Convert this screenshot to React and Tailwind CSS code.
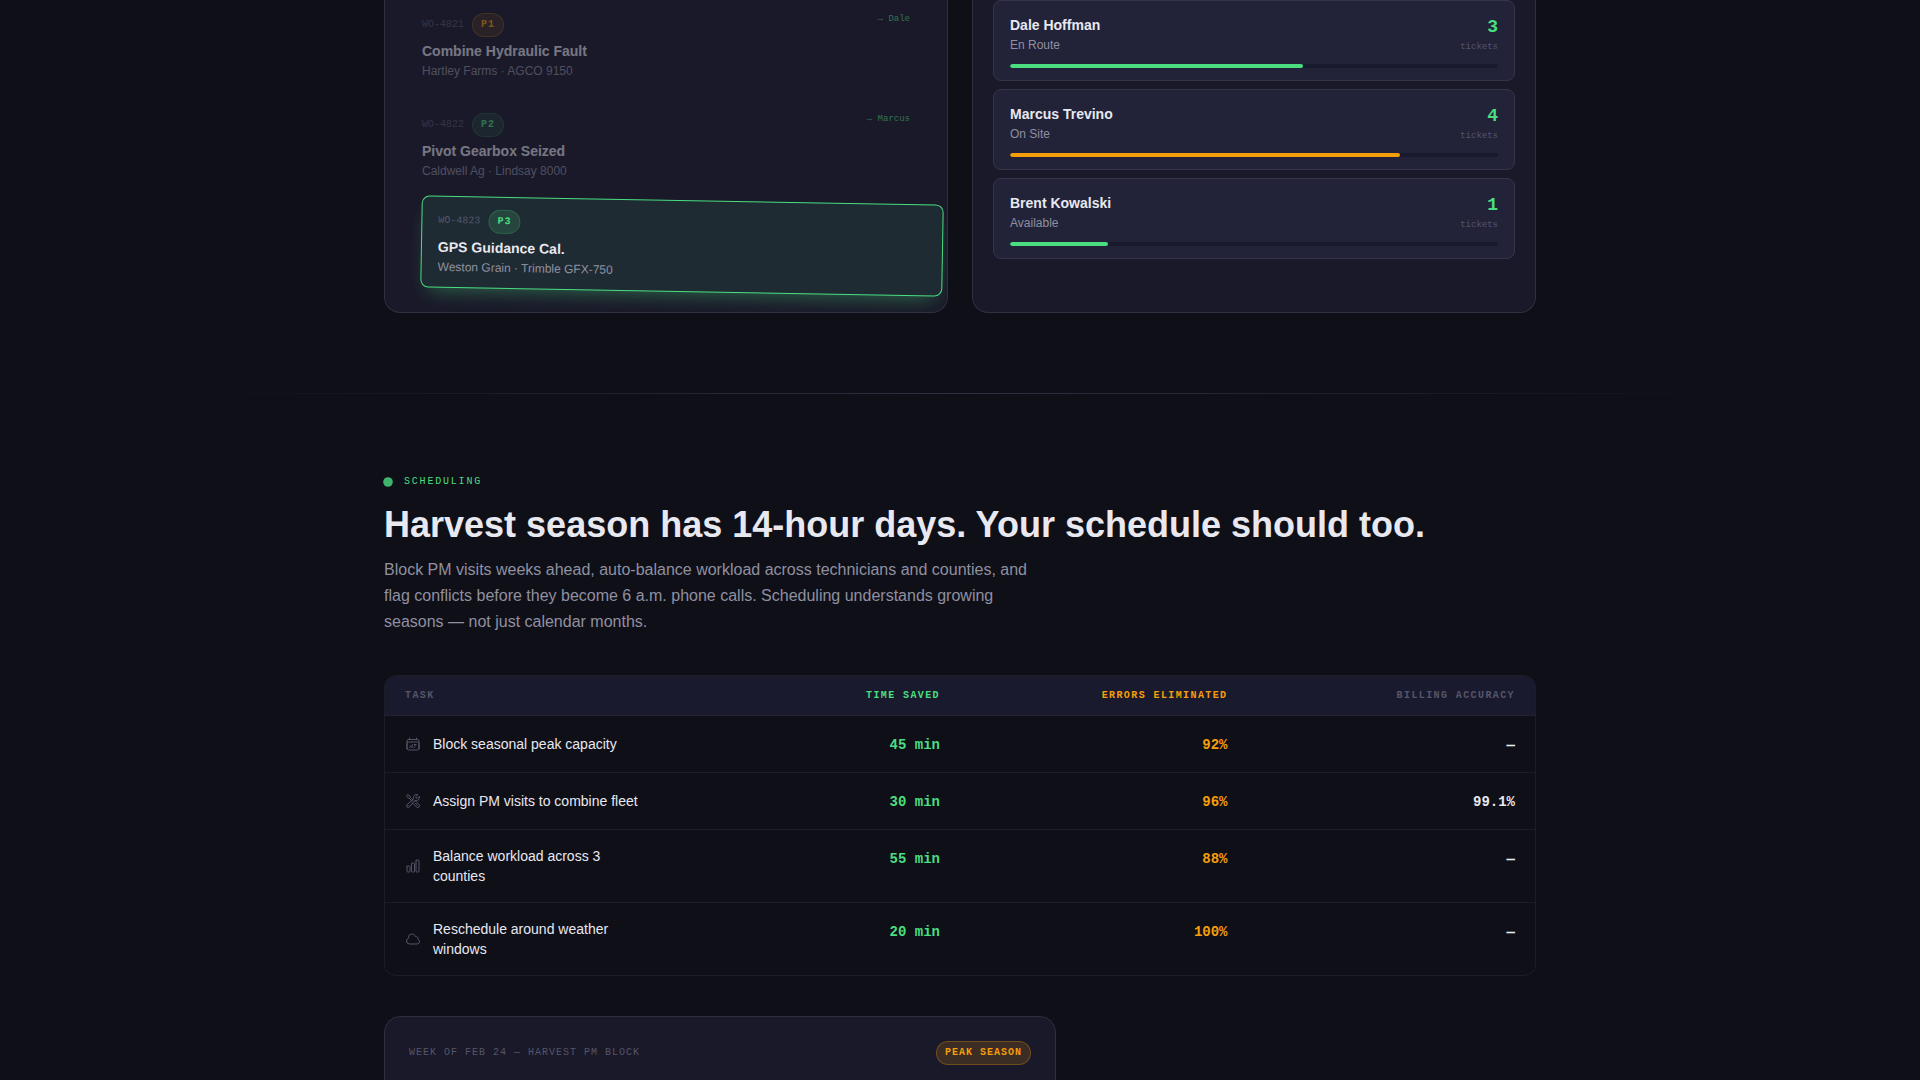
import {
  HiOutlineCalendarDateRange,
  HiOutlineChartBar,
  HiOutlineCloud,
  HiOutlineWrenchScrewdriver,
} from "react-icons/hi2";

const MONO = "font-['Liberation_Mono',monospace]";

const tickets = [
  { id: "WO-4821", priority: "P1", tone: "amber", title: "Combine Hydraulic Fault", meta: "Hartley Farms · AGCO 9150", assignee: "Dale" },
  { id: "WO-4822", priority: "P2", tone: "green", title: "Pivot Gearbox Seized", meta: "Caldwell Ag · Lindsay 8000", assignee: "Marcus" },
  { id: "WO-4823", priority: "P3", tone: "green", title: "GPS Guidance Cal.", meta: "Weston Grain · Trimble GFX-750", dragging: true },
];

const technicians = [
  { name: "Dale Hoffman", status: "En Route", count: 3, load: 60, bar: "bg-[#4ade80]" },
  { name: "Marcus Trevino", status: "On Site", count: 4, load: 80, bar: "bg-[#f59e0b]" },
  { name: "Brent Kowalski", status: "Available", count: 1, load: 20, bar: "bg-[#4ade80]" },
];

const tasks = [
  { icon: HiOutlineCalendarDateRange, label: "Block seasonal peak capacity", time: "45 min", errors: "92%", billing: "—" },
  { icon: HiOutlineWrenchScrewdriver, label: "Assign PM visits to combine fleet", time: "30 min", errors: "96%", billing: "99.1%" },
  { icon: HiOutlineChartBar, label: "Balance workload across 3 counties", time: "55 min", errors: "88%", billing: "—" },
  { icon: HiOutlineCloud, label: "Reschedule around weather windows", time: "20 min", errors: "100%", billing: "—" },
];

function Badge({ tone, children }) {
  const color =
    tone === "amber"
      ? "bg-[#f59e0b]/15 border-[#f59e0b]/30 text-[#f59e0b]"
      : "bg-[#4ade80]/15 border-[#4ade80]/20 text-[#4ade80]";
  return (
    <span
      className={`${MONO} ${color} rounded-full border px-2 py-[3px] text-[10px] leading-4 font-bold tracking-widest`}
    >
      {children}
    </span>
  );
}

function TicketCard({ ticket }) {
  const state = ticket.dragging
    ? "translate-x-4 rotate-1 bg-[#1f2b33] border-[#4ade80] shadow-[0_10px_20px_-8px_rgba(74,222,128,0.4)]"
    : "opacity-45 bg-[#1a1a2b] border-[#1c1c2e]";
  return (
    <div className={`relative rounded-lg border px-4 pt-3 pb-2.5 ${state}`}>
      <div className="mb-1 flex items-center gap-2">
        <span className={`${MONO} text-[10px] leading-4 text-[#55556a]`}>{ticket.id}</span>
        <Badge tone={ticket.tone}>{ticket.priority}</Badge>
      </div>
      <h3 className="text-sm leading-5 font-bold text-[#e8e8f0]">{ticket.title}</h3>
      <p className="text-xs leading-5 text-[#9090a0]">{ticket.meta}</p>
      {ticket.assignee && (
        <span className={`${MONO} absolute top-2.5 right-4 text-[9px] leading-4 text-[#4ade80]`}>
          → {ticket.assignee}
        </span>
      )}
    </div>
  );
}

function TechnicianCard({ tech }) {
  return (
    <div className="rounded-lg border border-[#353449] bg-[#222239] px-4 pt-[13px] pb-3">
      <div className="mb-2.5 flex justify-between">
        <div>
          <h3 className="text-sm leading-[22px] font-bold text-[#e8e8f0]">{tech.name}</h3>
          <p className="text-xs leading-[18px] text-[#9090a0]">{tech.status}</p>
        </div>
        <div className={`${MONO} text-right`}>
          <div className="text-lg leading-[26px] font-bold text-[#4ade80]">{tech.count}</div>
          <div className="text-[9px] leading-[14px] text-[#55556a]">tickets</div>
        </div>
      </div>
      <div className="h-1 overflow-hidden rounded-full bg-[#1a1a2e]">
        <div className={`h-full rounded-full ${tech.bar}`} style={{ width: `${tech.load}%` }} />
      </div>
    </div>
  );
}

function TaskTable() {
  const head = "px-5 py-3 text-[10px] leading-[15px] font-bold tracking-[0.14em]";
  const value = "px-5 pt-[17px] pb-[15px] text-right align-top text-sm leading-6 font-bold";
  return (
    <div className="overflow-hidden rounded-xl border border-[#1d1d29]">
      <table className="w-full table-fixed">
        <thead className={MONO}>
          <tr className="border-b border-[#222233] bg-[#1a1a2e]">
            <th className={`${head} text-left text-[#55556a]`}>TASK</th>
            <th className={`${head} text-right text-[#4ade80]`}>TIME SAVED</th>
            <th className={`${head} text-right text-[#f59e0b]`}>ERRORS ELIMINATED</th>
            <th className={`${head} text-right text-[#55556a]`}>BILLING ACCURACY</th>
          </tr>
        </thead>
        <tbody>
          {tasks.map(({ icon: Icon, label, time, errors, billing }) => (
            <tr key={label} className="border-b border-[#1d1d29] last:border-b-0">
              <td className="px-5 py-4">
                <div className="flex items-center gap-3">
                  <Icon className="size-4 shrink-0 text-[#55556a]" />
                  <span className="text-sm leading-5 text-[#e8e8f0]">{label}</span>
                </div>
              </td>
              <td className={`${MONO} ${value} text-[#4ade80]`}>{time}</td>
              <td className={`${MONO} ${value} text-[#f59e0b]`}>{errors}</td>
              <td className={`${MONO} ${value} text-[#e8e8f0]`}>{billing}</td>
            </tr>
          ))}
        </tbody>
      </table>
    </div>
  );
}

export default function App() {
  return (
    <div className="h-screen overflow-hidden bg-[#0f0f18] font-['Liberation_Sans',sans-serif] text-[#e8e8f0]">
      <section className="mx-auto max-w-6xl pb-20">
        <div className="grid grid-cols-2 gap-6">
          <div className="flex flex-col gap-2 overflow-hidden rounded-b-2xl border border-t-0 border-[#2f2f3f] bg-[#1a1929] px-5 pb-5">
            {tickets.map((ticket) => (
              <TicketCard key={ticket.id} ticket={ticket} />
            ))}
          </div>
          <div className="flex flex-col gap-2 rounded-b-2xl border border-t-0 border-[#2f2f3f] bg-[#1a1929] px-5 pb-5">
            {technicians.map((tech) => (
              <TechnicianCard key={tech.name} tech={tech} />
            ))}
          </div>
        </div>
      </section>

      <div className="mx-auto h-px w-4/5 bg-linear-to-r from-transparent via-[#2f2f40] to-transparent" />

      <section className="mx-auto max-w-6xl pt-20">
        <div className="mb-4 flex items-center gap-3">
          <span className="size-2 scale-120 rounded-full bg-[#4ade80] opacity-80" />
          <span className={`${MONO} text-[10px] leading-[15px] tracking-[0.18em] text-[#4ade80]`}>
            SCHEDULING
          </span>
        </div>
        <h2 className="mb-3 text-4xl leading-10 font-bold">
          Harvest season has 14-hour days. Your schedule should too.
        </h2>
        <p className="mb-10 max-w-[660px] text-base leading-[26px] text-[#9090a0]">
          Block PM visits weeks ahead, auto-balance workload across technicians and counties, and
          flag conflicts before they become 6 a.m. phone calls. Scheduling understands growing
          seasons — not just calendar months.
        </p>

        <TaskTable />

        <div className="mt-10 max-w-2xl rounded-2xl border border-[#2f2f3f] bg-[#1a1929] p-6 pb-24">
          <div className="flex items-center justify-between">
            <span className={`${MONO} text-[10px] leading-4 tracking-widest text-[#55556a]`}>
              WEEK OF FEB 24 — HARVEST PM BLOCK
            </span>
            <Badge tone="amber">PEAK SEASON</Badge>
          </div>
        </div>
      </section>
    </div>
  );
}
